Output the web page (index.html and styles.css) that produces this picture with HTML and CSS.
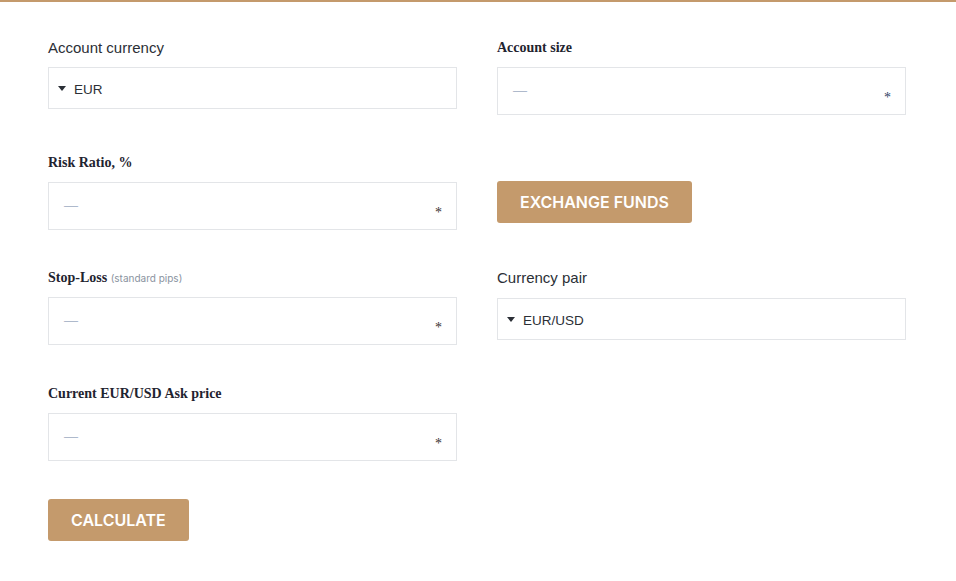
FILE: index.html
```html
<!DOCTYPE html>
<html>
<head>
<meta charset="utf-8">
<link rel="stylesheet" href="styles.css">
</head>
<body>
<div class="page">
  <form class="calc">
    <div class="field">
      <div class="label sans">Account currency</div>
      <div class="select"><span class="caret"></span><span class="val">EUR</span></div>
    </div>
    <div class="field">
      <div class="label serif">Account size</div>
      <div class="input"><span class="dash">—</span><span class="req blue">*</span></div>
    </div>

    <div class="field">
      <div class="label serif">Risk Ratio, %</div>
      <div class="input"><span class="dash">—</span><span class="req">*</span></div>
    </div>
    <div class="field">
      <div class="label spacer"></div>
      <div class="btn-row"><button type="button" class="btn">EXCHANGE FUNDS</button></div>
    </div>

    <div class="field">
      <div class="label serif">Stop-Loss <span class="hint">(standard pips)</span></div>
      <div class="input"><span class="dash">—</span><span class="req">*</span></div>
    </div>
    <div class="field">
      <div class="label sans">Currency pair</div>
      <div class="select shift"><span class="caret"></span><span class="val">EUR/USD</span></div>
    </div>

    <div class="field">
      <div class="label serif">Current EUR/USD Ask price</div>
      <div class="input"><span class="dash">—</span><span class="req">*</span></div>
    </div>
    <div class="field"></div>

    <div class="field">
      <div class="btn-row"><button type="button" class="btn">CALCULATE</button></div>
    </div>
  </form>
</div>
</body>
</html>
```
FILE: styles.css
```css
html, body {
  margin: 0;
  padding: 0;
  background: #fff;
}
.page {
  border-top: 2px solid #c49a6c;
  padding: 36px 0 40px 48px;
}
.calc {
  display: grid;
  grid-template-columns: 409px 409px;
  grid-template-rows: 77px 77px 78px 77px auto;
  column-gap: 40px;
  row-gap: 38px;
}
.field {
  display: flex;
  flex-direction: column;
}
.label {
  height: 20px;
  line-height: 20px;
  margin-bottom: 9px;
  color: #2b2f36;
  white-space: nowrap;
}
.label.sans {
  font-family: "Liberation Sans", Arial, sans-serif;
  font-size: 15px;
}
.label.serif {
  font-family: "Liberation Serif", "Times New Roman", serif;
  font-size: 14px;
  font-weight: bold;
  color: #1f2430;
}
.label.spacer {
  height: 19px;
}
.hint {
  font-family: Inter, "Liberation Sans", sans-serif;
  font-weight: normal;
  font-size: 10px;
  color: #8a93a0;
}
.select {
  box-sizing: border-box;
  height: 42px;
  border: 1px solid #e3e5e8;
  display: flex;
  align-items: center;
  padding: 3px 0 0 9px;
  font-family: "Liberation Sans", Arial, sans-serif;
  font-size: 13.5px;
  color: #2b2f36;
}
.select.shift {
  margin-top: 1px;
}
.caret {
  width: 0;
  height: 0;
  border-left: 4px solid transparent;
  border-right: 4px solid transparent;
  border-top: 5px solid #2b2f36;
  margin-right: 8px;
  margin-top: -3px;
}
.input {
  box-sizing: border-box;
  height: 48px;
  border: 1px solid #e3e5e8;
  display: flex;
  align-items: center;
  justify-content: space-between;
  padding: 0 14px 0 15px;
  font-family: "Liberation Serif", "Times New Roman", serif;
  font-size: 14px;
}
.dash {
  color: #6f84a8;
}
.req {
  color: #3a3330;
  margin-top: 13px;
}
.req.blue {
  color: #2f4366;
}
.btn-row {
  display: flex;
}
.btn {
  height: 42px;
  padding: 0 23px;
  border: none;
  border-radius: 3px;
  background: #c49a6c;
  color: #fff;
  font-family: Inter, "Liberation Sans", sans-serif;
  font-weight: 600;
  font-size: 16px;
  cursor: pointer;
}
```
